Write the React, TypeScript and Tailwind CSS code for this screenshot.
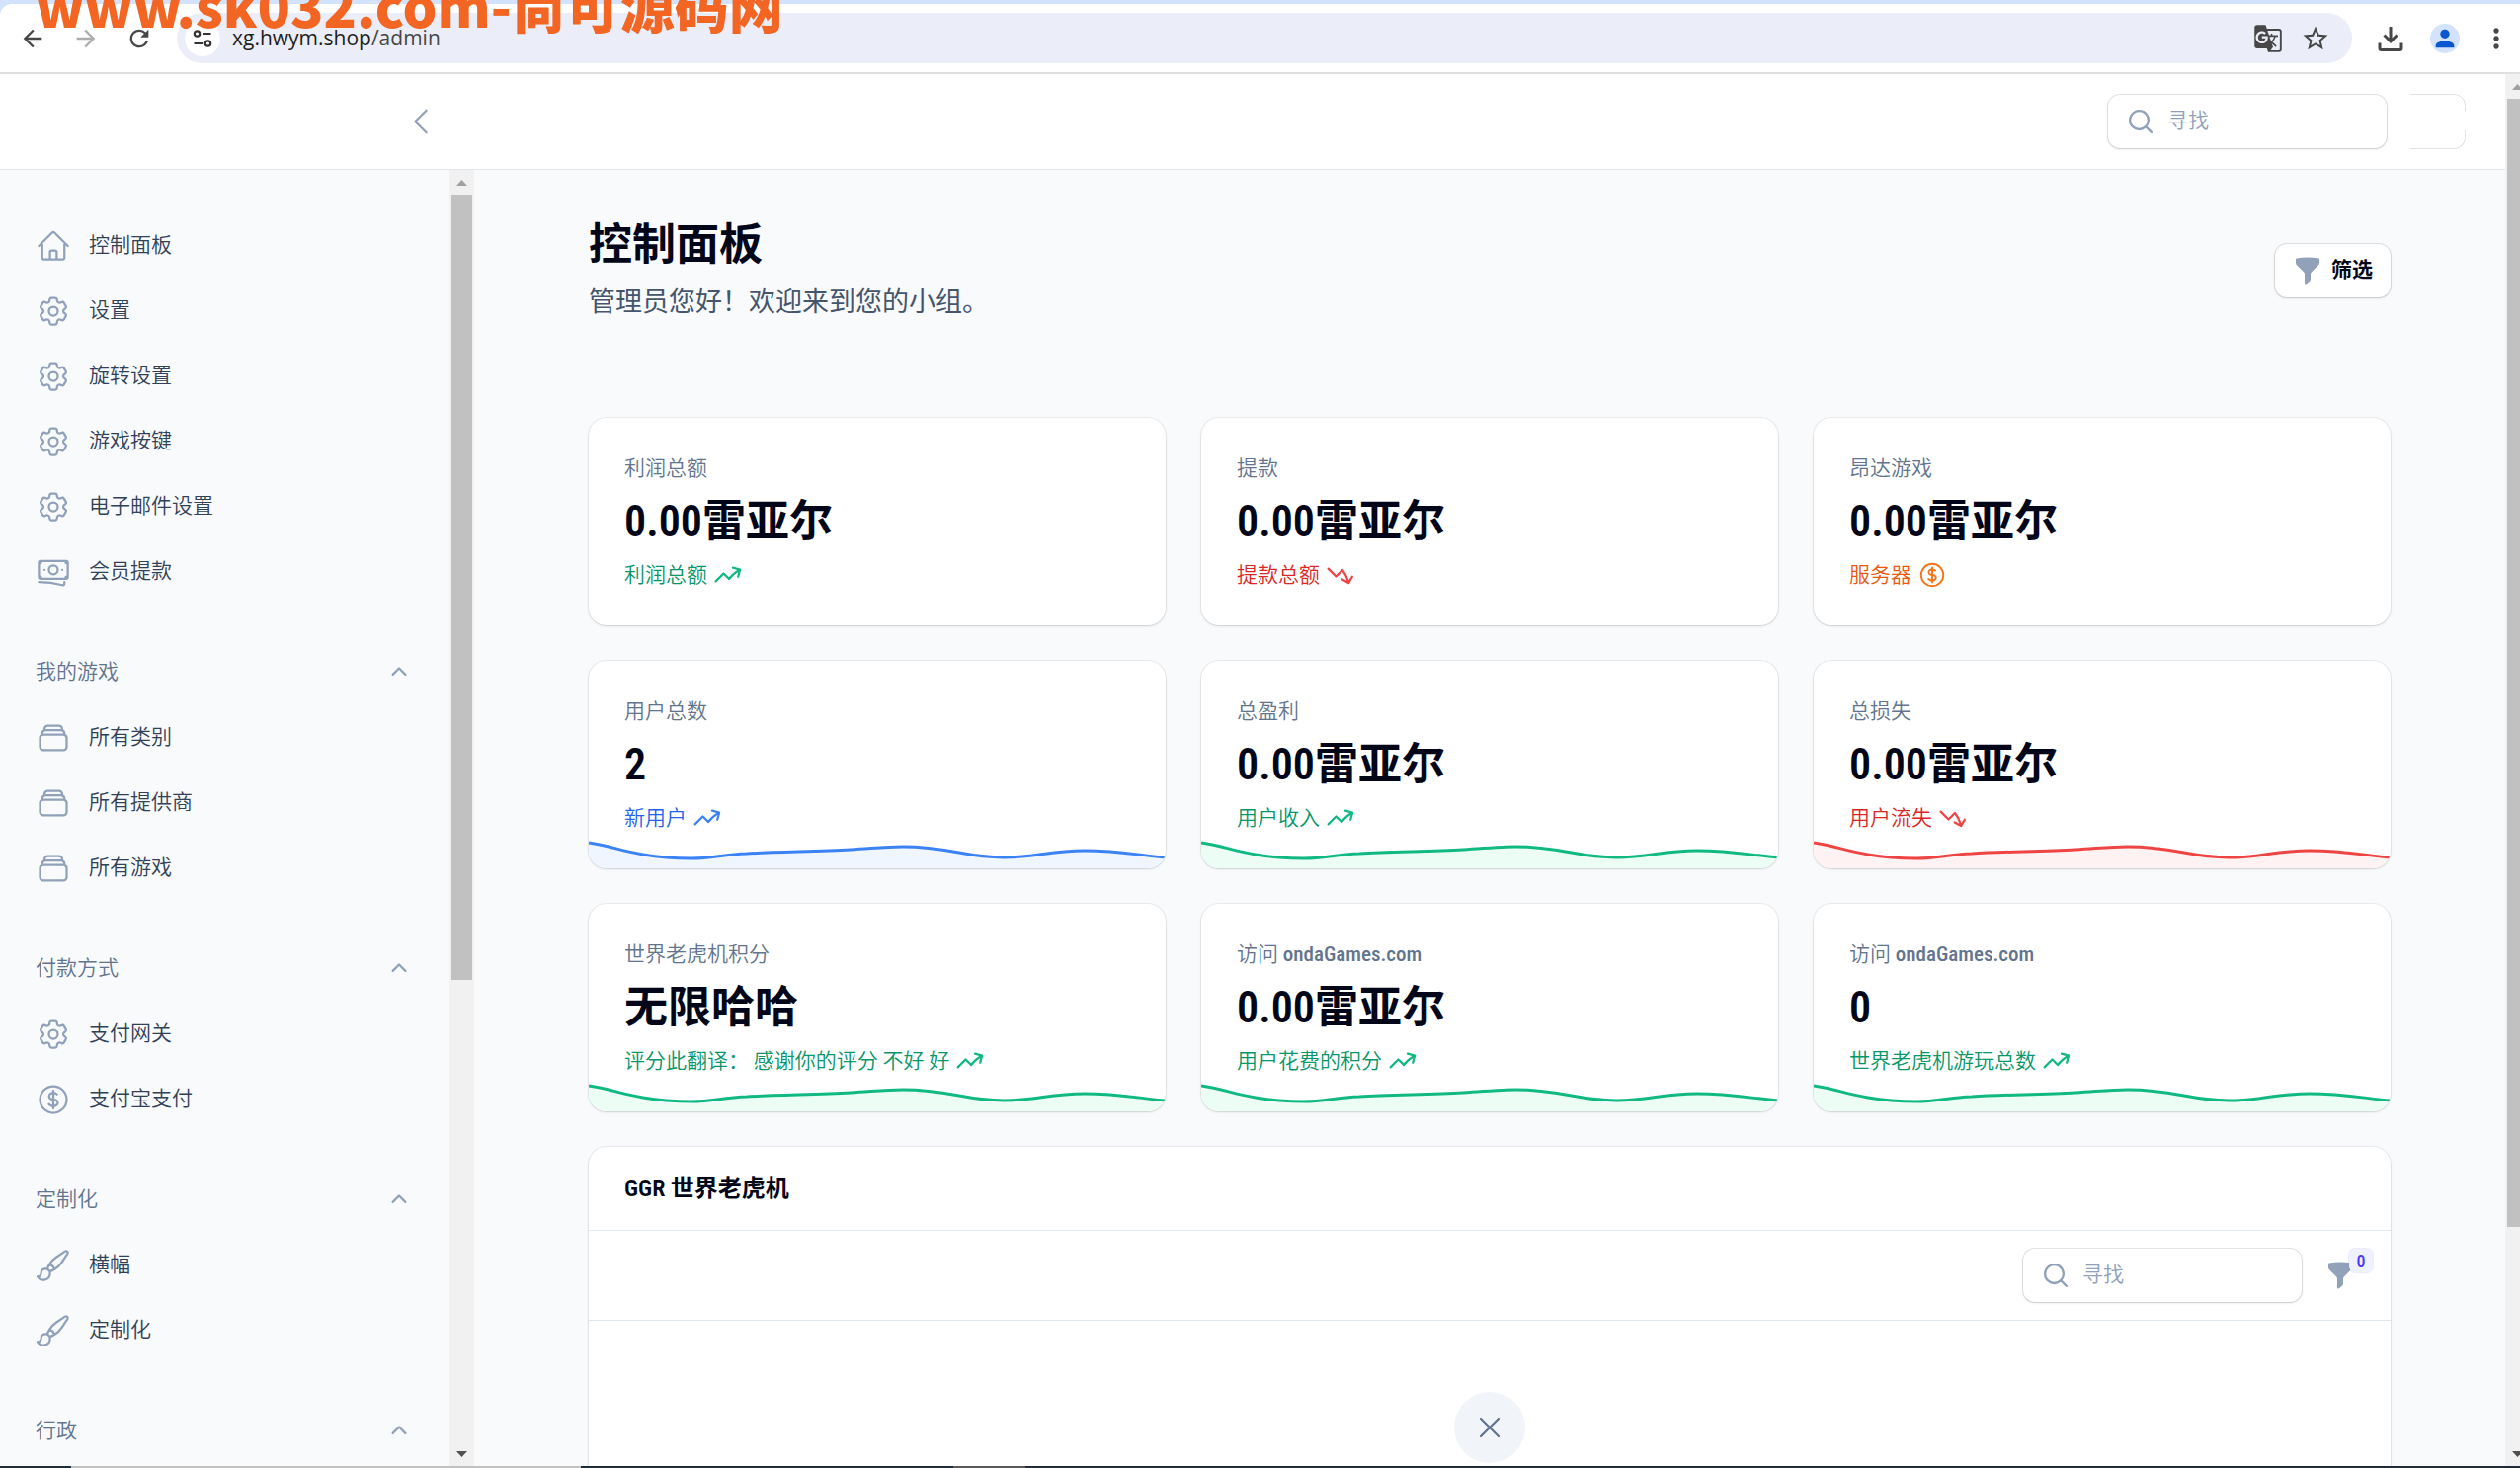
import type { ReactNode } from "react";
import type { IconType } from "react-icons";
import { MdArrowBack, MdArrowForward, MdGTranslate, MdMoreVert, MdPerson, MdRefresh, MdStarBorder } from "react-icons/md";
import {
  HiMiniArrowTrendingDown,
  HiMiniArrowTrendingUp,
  HiMiniChevronUp,
  HiMiniFunnel,
  HiMiniMagnifyingGlass,
  HiOutlineBanknotes,
  HiOutlineChevronLeft,
  HiOutlineCog6Tooth,
  HiOutlineCurrencyDollar,
  HiOutlineHome,
  HiOutlinePaintBrush,
  HiOutlineRectangleStack,
  HiOutlineXMark,
} from "react-icons/hi2";

type NavItem = { label: string; icon: IconType };
type NavGroup = { title?: string; items: NavItem[] };
type Tone = "green" | "red" | "blue" | "orange";
type Stat = { label: string; site?: string; value: string; note: string; tone: Tone; icon: IconType; chart?: boolean };

const NAV: NavGroup[] = [
  {
    items: [
      { label: "控制面板", icon: HiOutlineHome },
      { label: "设置", icon: HiOutlineCog6Tooth },
      { label: "旋转设置", icon: HiOutlineCog6Tooth },
      { label: "游戏按键", icon: HiOutlineCog6Tooth },
      { label: "电子邮件设置", icon: HiOutlineCog6Tooth },
      { label: "会员提款", icon: HiOutlineBanknotes },
    ],
  },
  {
    title: "我的游戏",
    items: [
      { label: "所有类别", icon: HiOutlineRectangleStack },
      { label: "所有提供商", icon: HiOutlineRectangleStack },
      { label: "所有游戏", icon: HiOutlineRectangleStack },
    ],
  },
  {
    title: "付款方式",
    items: [
      { label: "支付网关", icon: HiOutlineCog6Tooth },
      { label: "支付宝支付", icon: HiOutlineCurrencyDollar },
    ],
  },
  {
    title: "定制化",
    items: [
      { label: "横幅", icon: HiOutlinePaintBrush },
      { label: "定制化", icon: HiOutlinePaintBrush },
    ],
  },
  { title: "行政", items: [] },
];

const STATS: Stat[] = [
  { label: "利润总额", value: "0.00雷亚尔", note: "利润总额", tone: "green", icon: HiMiniArrowTrendingUp },
  { label: "提款", value: "0.00雷亚尔", note: "提款总额", tone: "red", icon: HiMiniArrowTrendingDown },
  { label: "昂达游戏", value: "0.00雷亚尔", note: "服务器", tone: "orange", icon: HiOutlineCurrencyDollar },
  { label: "用户总数", value: "2", note: "新用户", tone: "blue", icon: HiMiniArrowTrendingUp, chart: true },
  { label: "总盈利", value: "0.00雷亚尔", note: "用户收入", tone: "green", icon: HiMiniArrowTrendingUp, chart: true },
  { label: "总损失", value: "0.00雷亚尔", note: "用户流失", tone: "red", icon: HiMiniArrowTrendingDown, chart: true },
  { label: "世界老虎机积分", value: "无限哈哈", note: "评分此翻译： 感谢你的评分 不好 好", tone: "green", icon: HiMiniArrowTrendingUp, chart: true },
  { label: "访问", site: "ondaGames.com", value: "0.00雷亚尔", note: "用户花费的积分", tone: "green", icon: HiMiniArrowTrendingUp, chart: true },
  { label: "访问", site: "ondaGames.com", value: "0", note: "世界老虎机游玩总数", tone: "green", icon: HiMiniArrowTrendingUp, chart: true },
];

const TONES: Record<Tone, { text: string; icon: string; line: string; fill: string }> = {
  green: { text: "text-[#059669]", icon: "text-[#10b981]", line: "#10b981", fill: "#ecfdf5" },
  red: { text: "text-[#dc2626]", icon: "text-[#ef4444]", line: "#ef4444", fill: "#fef2f2" },
  blue: { text: "text-[#2563eb]", icon: "text-[#3b82f6]", line: "#3b82f6", fill: "#eff6ff" },
  orange: { text: "text-[#ea580c]", icon: "text-[#f97316]", line: "#f97316", fill: "#fff7ed" },
};

const WAVE =
  "M0 10 C20 13 33 18 55 22 C78 26 90 26 104 26 C125 26 135 22 160 21 C190 19 230 19 265 17 C285 16 298 14 318 14 C365 14 380 25 420 25 C455 25 465 18 502 18 C535 18 560 23 584 25";

function DownloadIcon() {
  return (
    <svg width="26" height="26" viewBox="0 0 26 26" fill="none" stroke="#474747" strokeWidth="3">
      <path d="M13 1v14M6.500 9.500 13 16l6.500-6.500M2 17.500V23q0 1.500 1.500 1.500h19Q24 24.500 24 23v-5.500" />
    </svg>
  );
}

function SiteInfoIcon() {
  return (
    <svg width="20" height="20" viewBox="0 0 20 20" fill="none" stroke="#333" strokeWidth="2.200">
      <circle cx="4.500" cy="5" r="2.700" />
      <circle cx="15.500" cy="15" r="2.700" />
      <path d="M10 5h8.500M1.500 15H10" />
    </svg>
  );
}

function BrowserBar() {
  return (
    <div className="bg-[#d3e3fd] pt-1">
      <div className="flex h-[71px] items-center rounded-tl-xl border-b-2 border-[#e0e0e0] bg-white pl-[19px] text-[#474747]">
        <div className="flex gap-[26px]">
          <button aria-label="后退"><MdArrowBack size={28} /></button>
          <button aria-label="前进" className="text-[#adadad]"><MdArrowForward size={28} /></button>
          <button aria-label="刷新"><MdRefresh size={28} /></button>
        </div>
        <div className="ml-6 flex h-[51px] flex-1 items-center rounded-full bg-[#ebeef8] pr-[22px] pl-2">
          <button aria-label="网站信息" className="flex size-9 items-center justify-center rounded-full bg-white">
            <SiteInfoIcon />
          </button>
          <a href="#admin" className="ml-3 flex-1 font-['Open_Sans',sans-serif] text-[21px] text-[#1f1f1f]">
            xg.hwym.shop<span className="text-[#474747]">/admin</span>
          </a>
          <button aria-label="翻译" className="mr-[18px]"><MdGTranslate size={30} /></button>
          <button aria-label="收藏"><MdStarBorder size={30} /></button>
        </div>
        <div className="flex items-center pr-2">
          <button aria-label="下载" className="ml-[26px]"><DownloadIcon /></button>
          <button aria-label="用户" className="ml-[27px] flex size-[30px] items-center justify-center rounded-full bg-[#d3e3fd] text-[#0b57d0]">
            <MdPerson size={28} />
          </button>
          <button aria-label="菜单" className="ml-[21px]"><MdMoreVert size={32} /></button>
        </div>
      </div>
    </div>
  );
}

function SearchBox({ id }: { id: string }) {
  return (
    <label htmlFor={id} className="flex h-[54px] w-[282px] items-center gap-3 rounded-xl bg-white pl-[18px] shadow-sm ring-1 ring-slate-950/10">
      <HiMiniMagnifyingGlass size={30} className="shrink-0 text-slate-400" />
      <input id={id} type="search" placeholder="寻找" className="w-full bg-transparent text-[21px] font-[350] outline-none placeholder:text-slate-400" />
    </label>
  );
}

function Arrow({ down }: { down?: boolean }) {
  return (
    <svg width="25" height="25" viewBox="0 0 25 25" className="shrink-0">
      {down ? <path d="M7 10h11l-5.500 6z" fill="#505050" /> : <path d="M7 16h11l-5.500-6z" fill="#a0a0a0" />}
    </svg>
  );
}

function ScrollTrack({ children }: { children: ReactNode }) {
  return (
    <div className="flex w-[25px] shrink-0 flex-col bg-[#f1f1f1]">
      <Arrow />
      <div className="min-h-0 flex-1 px-0.5">{children}</div>
      <Arrow down />
    </div>
  );
}

function TopBar() {
  return (
    <header className="flex h-[97px] shrink-0 items-center justify-between border-b border-[#e2e5ea] bg-white pr-10 pl-[408px]">
      <button aria-label="收起侧栏" className="text-slate-400"><HiOutlineChevronLeft size={36} /></button>
      <div className="flex items-center gap-6">
        <SearchBox id="global-search" />
        <button aria-label="账户" className="relative h-14 w-14 rounded-r-xl border border-l-0 border-[#e2e2e4] bg-white">
          <span className="absolute top-4 -right-px h-5 w-px bg-white" />
        </button>
      </div>
    </header>
  );
}

function Sidebar() {
  return (
    <aside className="flex w-[480px] shrink-0">
      <nav className="flex min-w-0 flex-1 flex-col gap-[42px] overflow-hidden px-6 pt-[47px] font-[350]">
        {NAV.map((group, i) => (
          <div key={group.title ?? i} className="flex shrink-0 flex-col gap-1.5">
            {group.title && (
              <button className="flex h-[60px] items-center justify-between px-3 text-[21px] text-slate-500">
                {group.title}
                <HiMiniChevronUp size={30} className="text-slate-400" />
              </button>
            )}
            {group.items.map(({ label, icon: Icon }) => (
              <a key={label} href="#" className="flex h-[60px] items-center gap-[18px] px-3 text-[21px] text-slate-700">
                <Icon size={36} className="text-slate-400" />
                {label}
              </a>
            ))}
          </div>
        ))}
      </nav>
      <ScrollTrack>
        <div className="h-[63%] bg-[#c1c1c1]" />
      </ScrollTrack>
    </aside>
  );
}

function StatCard({ stat }: { stat: Stat }) {
  const tone = TONES[stat.tone];
  const Icon = stat.icon;
  return (
    <div className="relative overflow-hidden rounded-[18px] bg-white p-9 shadow-sm ring-1 ring-slate-950/5">
      <div className="flex flex-col gap-3">
        <div className="text-[21px] leading-[30px] font-[350] text-slate-500">
          {stat.label}
          {stat.site && <span className="font-medium"> {stat.site}</span>}
        </div>
        <div className="text-[44px] leading-[54px] font-semibold text-slate-950">{stat.value}</div>
        <div className={`flex items-center gap-1.5 text-[21px] leading-[30px] font-[350] ${tone.text}`}>
          {stat.note}
          <Icon size={30} className={tone.icon} />
        </div>
      </div>
      {stat.chart && (
        <svg className="absolute inset-x-0 bottom-0 h-9 w-full" viewBox="0 0 584 36" preserveAspectRatio="none">
          <path d={`${WAVE} V36 H0 Z`} fill={tone.fill} />
          <path d={WAVE} fill="none" stroke={tone.line} strokeWidth="3" />
        </svg>
      )}
    </div>
  );
}

function GgrTable() {
  return (
    <section className="divide-y divide-slate-200 rounded-[18px] bg-white shadow-sm ring-1 ring-slate-950/5">
      <h2 className="px-9 py-6 text-2xl leading-9 font-semibold text-slate-950">GGR 世界老虎机</h2>
      <div className="flex items-center justify-end gap-6 px-9 py-[18px]">
        <SearchBox id="table-search" />
        <button aria-label="筛选" className="relative text-slate-400">
          <HiMiniFunnel size={30} />
          <span className="absolute -top-3 left-6 flex size-6 items-center justify-center rounded-md bg-indigo-50 text-[18px] font-medium text-indigo-600 ring-1 ring-indigo-600/10">
            0
          </span>
        </button>
      </div>
      <div className="flex justify-center py-[72px]">
        <div className="flex size-[72px] items-center justify-center rounded-full bg-slate-100 text-slate-500">
          <HiOutlineXMark size={36} />
        </div>
      </div>
    </section>
  );
}

function Dashboard() {
  return (
    <main className="min-w-0 flex-1 overflow-hidden">
      <div className="mx-auto max-w-[1920px] px-12 pt-[49px]">
        <div className="mb-24 flex items-center justify-between">
          <div>
            <h1 className="text-[44px] leading-[54px] font-semibold text-slate-950">控制面板</h1>
            <p className="mt-2.5 text-[27px] leading-[42px] text-slate-600">管理员您好！欢迎来到您的小组。</p>
          </div>
          <button className="flex h-[54px] items-center gap-[9px] rounded-xl bg-white px-[18px] text-[21px] font-semibold text-slate-950 shadow-sm ring-1 ring-slate-950/10">
            <HiMiniFunnel size={30} className="text-slate-400" />
            筛选
          </button>
        </div>
        <div className="grid grid-cols-3 gap-9 pb-9">
          {STATS.map((stat, i) => (
            <StatCard key={i} stat={stat} />
          ))}
        </div>
        <GgrTable />
      </div>
    </main>
  );
}

export default function App() {
  return (
    <div className="relative flex h-screen flex-col overflow-hidden bg-slate-50 font-['Roboto_Condensed','Roboto','Noto_Sans_CJK_SC',sans-serif]">
      <BrowserBar />
      <div className="flex min-h-0 flex-1">
        <div className="flex min-w-0 flex-1 flex-col">
          <TopBar />
          <div className="flex min-h-0 flex-1">
            <Sidebar />
            <Dashboard />
          </div>
        </div>
        <div className="flex w-[15px] overflow-hidden">
          <ScrollTrack>
            <div className="h-[84%] bg-[#c1c1c1]" />
          </ScrollTrack>
        </div>
      </div>
      {/* top edge of the taskbar */}
      <div className="flex h-0.5 shrink-0 bg-[#1f2d3a]">
        <div className="w-[72px]" />
        <div className="w-[516px] bg-[#c0c0c0]" />
        <div className="w-[377px]" />
        <div className="w-[73px] bg-[#5a5a5a]" />
      </div>
      <div className="pointer-events-none absolute -top-9 left-9 font-['Noto_Sans_CJK_SC',sans-serif] text-[55px] leading-[80px] font-black whitespace-nowrap text-[#f26522]">
        www.sk032.com-尚可源码网
      </div>
    </div>
  );
}
